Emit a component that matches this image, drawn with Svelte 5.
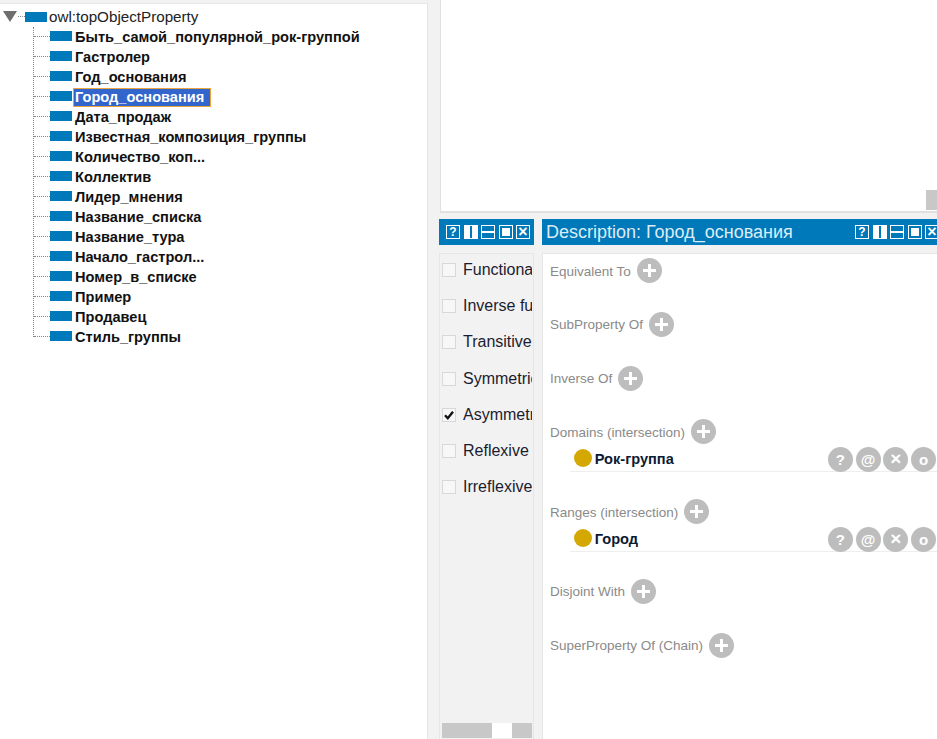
<script>
    const props = [
        "Быть_самой_популярной_рок-группой", "Гастролер", "Год_основания", "Город_основания",
        "Дата_продаж", "Известная_композиция_группы", "Количество_коп...", "Коллектив",
        "Лидер_мнения", "Название_списка", "Название_тура", "Начало_гастрол...",
        "Номер_в_списке", "Пример", "Продавец", "Стиль_группы"
    ];
    const selected = "Город_основания";
    const characteristics = [
        ["Functional", false], ["Inverse functional", false], ["Transitive", false], ["Symmetric", false],
        ["Asymmetric", true], ["Reflexive", false], ["Irreflexive", false]
    ];
    const sections = [
        { label: "Equivalent To" },
        { label: "SubProperty Of" },
        { label: "Inverse Of" },
        { label: "Domains (intersection)", item: "Рок-группа" },
        { label: "Ranges (intersection)", item: "Город" },
        { label: "Disjoint With" },
        { label: "SuperProperty Of (Chain)" }
    ];
</script>

{#snippet viewButtons()}
    <div class="view-buttons">
        <span class="vb"><b>?</b></span>
        <span class="vb split-v"></span>
        <span class="vb split-h"></span>
        <span class="vb"><i></i></span>
        <span class="vb"><b class="x">×</b></span>
    </div>
{/snippet}

<div class="page">
    <aside class="tree">
        <div class="root-row">
            <span class="twisty"></span>
            <span class="dots"></span>
            <span class="prop-icon"></span>
            <span class="root-label">owl:topObjectProperty</span>
        </div>
        <ul>
            {#each props as p}
                <li>
                    <span class="prop-icon"></span>
                    <span class="prop-label" class:selected={p === selected}>{p}</span>
                </li>
            {/each}
        </ul>
    </aside>

    <main class="right">
        <div class="top-panel"><span class="thumb"></span></div>

        <div class="bottom">
            <section class="chars">
                <header class="bar">{@render viewButtons()}</header>
                <div class="chars-body">
                    <div class="chars-list">
                        {#each characteristics as [name, on]}
                            <label class="char">
                                <span class="box">{#if on}<svg viewBox="0 0 14 14" width="14" height="14"><path d="M3 7.2l2.8 3L11 3.8" fill="none" stroke="#111" stroke-width="2.4"/></svg>{/if}</span>
                                <span class="char-name">{name}</span>
                            </label>
                        {/each}
                    </div>
                    <div class="hscroll"><span class="sb-a"></span><span class="sb-gap"></span><span class="sb-b"></span></div>
                </div>
            </section>

            <section class="desc">
                <header class="bar">
                    <span class="title">Description: Город_основания</span>
                    {@render viewButtons()}
                </header>
                <div class="desc-body">
                    {#each sections as s}
                        <div class="sec">
                            <div class="sec-head">
                                <span class="sec-label">{s.label}</span>
                                <span class="plus"></span>
                            </div>
                            {#if s.item}
                                <div class="item">
                                    <span class="dot"></span>
                                    <span class="item-name">{s.item}</span>
                                    <span class="round">?</span>
                                    <span class="round">@</span>
                                    <span class="round big">×</span>
                                    <span class="round">o</span>
                                </div>
                            {/if}
                        </div>
                    {/each}
                </div>
            </section>
        </div>
    </main>
</div>

<style>
    :global(body) {
        margin: 0;
        background: #fff;
    }

    .page {
        display: flex;
        width: 937px;
        height: 739px;
        overflow: hidden;
        font-family: "Liberation Sans", Arial, sans-serif;
        background: #f2f2f2;
    }

    /* left tree */
    .tree {
        width: 428px;
        flex: none;
        box-sizing: border-box;
        margin-top: 3px;
        padding-top: 2px;
        background: #fff;
        border-right: 1px solid #e4e4e4;
        border-top: 1px solid #e8e8e8;
    }

    .root-row {
        display: flex;
        align-items: center;
        height: 21px;
    }

    .twisty {
        width: 0;
        height: 0;
        margin-left: 3px;
        border-left: 7px solid transparent;
        border-right: 7px solid transparent;
        border-top: 11px solid #6e6e6e;
    }

    .dots {
        width: 7px;
        margin-left: 1px;
        border-top: 1px dotted #888;
    }

    .prop-icon {
        width: 22px;
        height: 10px;
        flex: none;
        background: #0079ba;
    }

    .root-label {
        margin-left: 2px;
        font-size: 15.2px;
        color: #222;
    }

    ul {
        list-style: none;
        margin: 0 0 0 33px;
        padding: 0;
        border-left: 1px dotted #888;
        height: 310px;
    }

    li {
        display: flex;
        align-items: center;
        height: 20px;
        padding-left: 16px;
        position: relative;
    }

    li::before {
        content: "";
        position: absolute;
        left: 0;
        width: 16px;
        top: 9px;
        border-top: 1px dotted #888;
    }

    li .prop-icon {
        margin-bottom: 2px;
    }

    .prop-label {
        margin-left: 1px;
        font-size: 14.6px;
        font-weight: 700;
        color: #111;
        white-space: nowrap;
        line-height: 17px;
        padding: 0 2px 0 1px;
        border: 1px solid transparent;
    }

    .prop-label.selected {
        background: #3366cc;
        color: #fff;
        border-color: #eba33c;
        padding-right: 6px;
    }

    /* right side */
    .right {
        flex: 1;
        min-width: 0;
        display: flex;
        flex-direction: column;
    }

    .top-panel {
        height: 213px;
        flex: none;
        box-sizing: border-box;
        margin-left: 12px;
        background: #fff;
        border-left: 1px solid #e0e0e0;
        border-bottom: 2px solid #e0e0e0;
        display: flex;
        justify-content: flex-end;
        align-items: flex-end;
    }

    .thumb {
        width: 11px;
        height: 20px;
        margin-bottom: 1px;
        background: #c8c8c8;
    }

    .bottom {
        flex: 1;
        display: flex;
        gap: 8px;
        margin-top: 6px;
        margin-left: 11px;
        min-height: 0;
    }

    .bar {
        height: 26px;
        box-sizing: border-box;
        background: #0079ba;
        display: flex;
        align-items: center;
        flex: none;
    }

    .chars {
        width: 95px;
        flex: none;
        display: flex;
        flex-direction: column;
    }

    .chars .bar {
        padding-left: 7px;
    }

    .desc .bar {
        padding-left: 4px;
        justify-content: space-between;
    }

    .view-buttons {
        display: flex;
        gap: 3.5px;
        margin-right: -2px;
        flex: none;
    }

    .vb {
        width: 14px;
        height: 14px;
        box-sizing: border-box;
        border: 1px solid #fff;
        display: flex;
        align-items: center;
        justify-content: center;
        flex: none;
        color: #fff;
        font-size: 12px;
        line-height: 12px;
    }

    .vb b {
        font-weight: 700;
    }

    .vb b.x {
        font-size: 16px;
    }

    .vb i {
        width: 8px;
        height: 8px;
        background: #fff;
    }

    .split-v {
        background: linear-gradient(90deg, #fff 0 5px, #0079ba 5px 7px, #fff 7px);
    }

    .split-h {
        background: linear-gradient(180deg, #0079ba 0 5px, #fff 5px 7px, #0079ba 7px);
    }

    .title {
        font-size: 18px;
        color: #dcecf5;
        white-space: nowrap;
    }

    .chars-body {
        flex: 1;
        margin-top: 8px;
        min-height: 0;
        box-sizing: border-box;
        border-top: 1px solid #e6e6e6;
        border-left: 1px solid #e6e6e6;
        border-right: 1px solid #e6e6e6;
        display: flex;
        flex-direction: column;
        overflow: hidden;
        padding: 0 1px 0 2px;
    }

    .chars-list {
        flex: 1;
        margin-top: -2px;
        min-height: 0;
    }

    .char {
        display: flex;
        align-items: center;
        height: 36.2px;
        gap: 7px;
        white-space: nowrap;
        overflow: hidden;
    }

    .box {
        width: 14px;
        height: 14px;
        flex: none;
        box-sizing: border-box;
        border: 1px solid #d8d8d8;
        background: #f7f7f7;
        display: flex;
    }

    .box svg {
        margin: -1px;
        flex: none;
    }

    .char-name {
        font-size: 16px;
        color: #1c1c30;
    }

    .hscroll {
        display: flex;
        height: 15px;
        flex: none;
        margin-bottom: 1px;
    }

    .sb-a {
        width: 50px;
        background: #c8c8c8;
    }

    .sb-gap {
        width: 20px;
        background: #fff;
    }

    .sb-b {
        width: 20px;
        background: #c8c8c8;
    }

    .desc {
        flex: 1;
        min-width: 0;
        display: flex;
        flex-direction: column;
    }

    .desc-body {
        flex: 1;
        margin-top: 8px;
        background: #fff;
        border-top: 1px solid #e6e6e6;
        border-left: 1px solid #e6e6e6;
        padding: 4px 0 0 7px;
        overflow: hidden;
    }

    .sec {
        margin-bottom: 28.8px;
    }

    .sec-head {
        display: flex;
        align-items: center;
        gap: 6px;
        height: 25px;
    }

    .sec-label {
        margin-top: 1px;
        font-size: 13.5px;
        color: #8a8a8a;
        white-space: nowrap;
    }

    .plus {
        width: 25px;
        height: 25px;
        border-radius: 50%;
        flex: none;
        background:
            linear-gradient(#fff, #fff) center / 13px 3px no-repeat,
            linear-gradient(#fff, #fff) center / 3px 13px no-repeat,
            #bdbdbd;
    }

    .item {
        display: flex;
        align-items: center;
        height: 26px;
        margin-top: 1px;
        margin-left: 20px;
        padding-left: 4px;
        padding-right: 1px;
        border-bottom: 1px solid #eee;
        margin-bottom: -2px;
        gap: 2.7px;
    }

    .dot {
        width: 18px;
        height: 18px;
        border-radius: 50%;
        background: #d4a800;
        flex: none;
    }

    .item-name {
        flex: 1;
        padding-top: 2px;
        font-size: 14.6px;
        font-weight: 700;
        color: #0c1a33;
    }

    .round {
        width: 25px;
        height: 25px;
        margin-top: 2px;
        border-radius: 50%;
        background: #bdbdbd;
        color: #fff;
        font-size: 15px;
        font-weight: 700;
        display: flex;
        align-items: center;
        justify-content: center;
        flex: none;
    }

    .round.big {
        font-size: 19px;
    }
</style>
